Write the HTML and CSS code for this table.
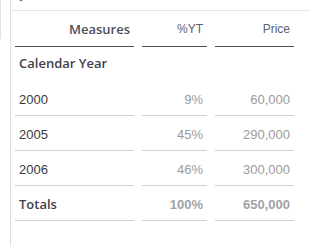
FILE: index.html
```html
<!DOCTYPE html>
<html>
<head>
<meta charset="utf-8">
<link rel="stylesheet" href="styles.css">
</head>
<body>
<div class="page">
  <div class="rail"><div class="rail-box"></div></div>
  <div class="panel">
    <div class="panel-top"><span class="caret"></span></div>
    <div class="table">
      <div class="cell head label">Measures</div>
      <div class="cell head num">%YT</div>
      <div class="cell head num">Price</div>

      <div class="cell group label">Calendar Year</div>
      <div class="cell group"></div>
      <div class="cell group"></div>

      <div class="cell row year">2000</div>
      <div class="cell row num val">9%</div>
      <div class="cell row num val">60,000</div>

      <div class="cell row year">2005</div>
      <div class="cell row num val">45%</div>
      <div class="cell row num val">290,000</div>

      <div class="cell row year">2006</div>
      <div class="cell row num val">46%</div>
      <div class="cell row num val">300,000</div>

      <div class="cell row label">Totals</div>
      <div class="cell row num total">100%</div>
      <div class="cell row num total">650,000</div>
    </div>
  </div>
</div>
</body>
</html>
```

FILE: styles.css
```css
html, body {
  margin: 0;
  padding: 0;
  background: #ffffff;
}
.page {
  display: flex;
  width: 318px;
  height: 248px;
  overflow: hidden;
}
.rail {
  width: 10px;
  flex: none;
}
.rail-box {
  height: 39px;
  border-left: 1px solid #e2e2e2;
}
.panel {
  width: 299px;
  border-left: 1px solid #e0e0e0;
  height: 246px;
}
.panel-top {
  height: 10px;
  border-bottom: 1px solid #e6e6e6;
  position: relative;
}
.caret {
  position: absolute;
  left: 8px;
  top: -3px;
  width: 4px;
  height: 4px;
  border-radius: 2px;
  background: #5a6a7a;
}
.table {
  display: grid;
  grid-template-columns: 119px 65px 79px;
  column-gap: 8px;
  padding-left: 4px;
}
.cell {
  box-sizing: border-box;
  display: flex;
  align-items: center;
  padding: 0 4px;
  font-family: "Liberation Sans", Arial, sans-serif;
  font-size: 13px;
}
.head {
  height: 36px;
  border-bottom: 1px solid #4a525c;
  justify-content: flex-end;
  color: #5a6270;
  font-size: 12px;
  padding-top: 1px;
}
.head.label {
  font-family: "Open Sans", sans-serif;
  font-weight: 600;
  font-size: 13px;
  color: #4a5058;
}
.group {
  height: 34px;
  padding-bottom: 3px;
}
.label {
  font-family: "Open Sans", sans-serif;
  font-weight: 600;
  font-size: 13px;
  color: #3f4248;
}
.row {
  height: 35px;
  border-bottom: 1px solid #cfcfcf;
  padding-top: 2px;
}
.year {
  color: #3a3a3a;
}
.num {
  justify-content: flex-end;
}
.val {
  color: #9b9b9b;
}
.total {
  color: #a0a3a8;
  font-weight: bold;
}
```
